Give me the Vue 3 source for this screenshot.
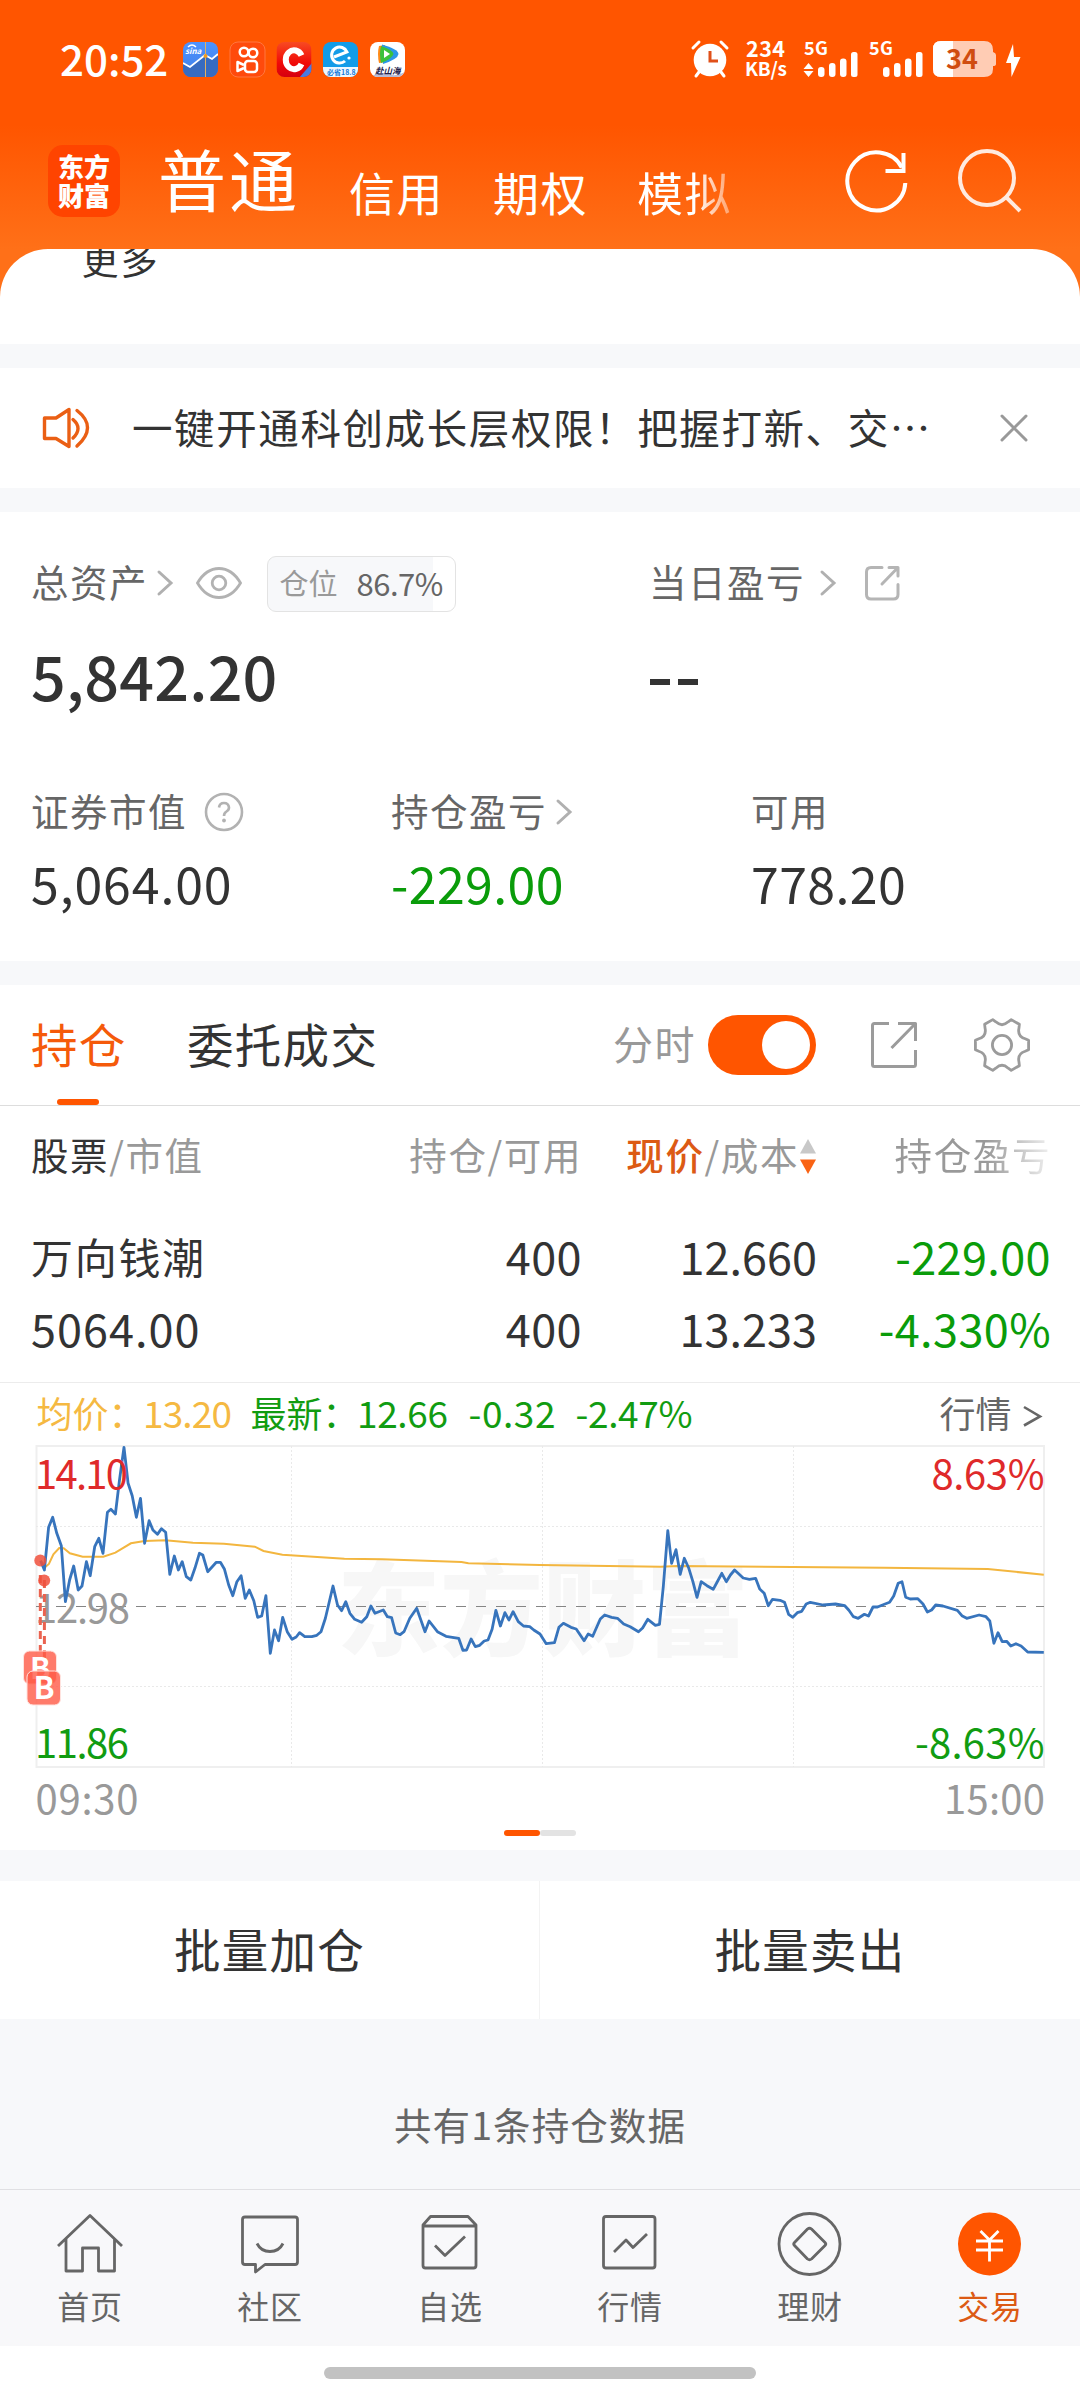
<script setup>
const price = [
  [118,392],[129,420],[141,292],[153,262],[165,310],[178,347],[190,515],[202,450],[214,408],[227,480],[238,468],[251,395],[262,437],[275,350],[287,325],[299,370],[312,247],[322,238],[335,252],[347,150],[360,52],[372,160],[384,197],[396,262],[408,205],[420,340],[433,272],[444,300],[457,313],[469,296],[481,307],[493,433],[506,378],[518,420],[529,395],[541,440],[554,450],[566,415],[579,370],[589,375],[603,425],[615,412],[628,397],[640,397],[652,418],[664,465],[676,497],[688,455],[700,437],[712,505],[724,480],[737,512],[748,562],[760,558],[772,497],[785,670],[797,600],[809,632],[821,562],[834,605],[848,628],[860,621],[870,608],[885,620],[905,620],[920,616],[932,605],[945,565],[967,468],[980,525],[992,542],[1004,515],[1016,550],[1030,568],[1050,577],[1065,560],[1077,528],[1089,550],[1113,540],[1125,560],[1137,563],[1149,609],[1162,614],[1173,605],[1190,565],[1210,535],[1234,605],[1246,573],[1270,605],[1295,619],[1332,625],[1344,661],[1355,660],[1368,627],[1380,650],[1393,646],[1406,633],[1417,630],[1429,598],[1440,541],[1453,588],[1466,548],[1478,570],[1490,545],[1505,575],[1520,588],[1538,590],[1550,600],
  [1568,612],[1586,641],[1610,638],[1623,592],[1636,580],[1658,592],[1673,597],[1696,632],[1708,612],[1721,619],[1743,567],[1756,555],[1776,562],[1793,565],[1811,582],[1830,590],[1854,605],[1866,594],[1881,568],[1903,586],[1915,583],[1926,470],[1939,302],[1950,400],[1963,359],[1975,433],[1987,385],[2000,415],[2012,455],[2024,502],[2036,455],[2053,467],[2071,478],[2084,453],[2096,430],[2109,455],[2121,435],[2133,420],[2158,444],[2176,448],[2194,445],[2206,477],[2219,490],[2231,527],[2243,508],[2265,511],[2278,517],[2290,553],[2302,562],[2315,548],[2328,544],[2341,522],[2353,517],[2390,525],[2426,522],[2453,527],[2465,541],[2478,560],[2492,565],[2510,553],[2522,558],[2535,531],[2548,531],[2568,523],[2583,517],[2595,498],[2608,460],[2619,455],[2630,502],[2643,507],[2665,506],[2680,522],[2693,546],[2705,540],[2717,525],[2738,528],[2780,541],[2793,557],[2807,565],[2843,555],[2863,560],[2874,573],[2886,640],[2898,608],[2910,635],[2923,634],[2935,648],[2950,641],[2965,648],[2984,666],[3031,667],
]
const average = [
  [118,392],[133,410],[142,402],[155,373],[172,354],[185,355],[203,370],[240,380],[300,380],[335,368],[380,340],[420,333],[480,331],[560,338],[650,341],[740,350],[765,363],[820,374],[1000,386],[1110,388],[1340,396],[1360,400],[1568,405],[1918,410],[1968,408],[2568,413],[2868,417],[3031,434],
]
const toPoints = (list) => list.map(([x, y]) => `${(x / 2.9037).toFixed(1)},${(y / 3).toFixed(1)}`).join(' ')
const priceLine = toPoints(price)
const averageLine = toPoints(average)

const polar = (deg, r) => {
  const a = (deg * Math.PI) / 180
  return `${(30 + r * Math.cos(a)).toFixed(2)} ${(30 + r * Math.sin(a)).toFixed(2)}`
}
let gear = ''
for (let k = 0; k < 6; k++) {
  const a = k * 60
  gear += `${k ? 'L' : 'M'}${polar(a - 15, 24)}L${polar(a - 10, 27)}L${polar(a + 10, 27)}L${polar(a + 15, 24)}Q${polar(a + 30, 17.5)} ${polar(a + 45, 24)}`
}
gear += 'Z'

const nav = [
  { key: 'home', label: '首页' },
  { key: 'chat', label: '社区' },
  { key: 'fav', label: '自选' },
  { key: 'quote', label: '行情' },
  { key: 'wealth', label: '理财' },
  { key: 'trade', label: '交易' },
]
</script>

<template>
  <div class="screen">
    <div class="hero">
      <div class="status">
        <span class="t clock">20:52</span>
        <svg class="apps" width="224" height="38" viewBox="0 0 224 38">
          <defs>
            <linearGradient id="sky" x1="0" y1="0" x2="0" y2="1"><stop offset="0" stop-color="#4d93ff" /><stop offset="1" stop-color="#3f7fe6" /></linearGradient>
            <linearGradient id="red" x1="0" y1="0" x2="0" y2="1"><stop offset="0" stop-color="#f84a22" /><stop offset=".6" stop-color="#f00a08" /><stop offset="1" stop-color="#d50010" /></linearGradient>
            <clipPath id="c1"><rect x="1" y="1" width="35" height="35" rx="8" /></clipPath>
            <clipPath id="c3"><rect x="94.500" y="1" width="35" height="35" rx="8" /></clipPath>
            <clipPath id="c4"><rect x="141" y="1" width="35" height="35" rx="8" /></clipPath>
            <clipPath id="c5"><rect x="188" y="1" width="35" height="35" rx="8" /></clipPath>
          </defs>
          <g clip-path="url(#c1)">
            <rect x="1" y="1" width="35" height="35" fill="url(#sky)" />
            <path d="M1 23L8 27L23 15L30 19L36 14V36H1Z" fill="#376bc0" />
            <path d="M1 22L8 26L23 14L30 18L36 13" fill="none" stroke="#fff" stroke-width="1.800" />
            <path d="M23.500 0V37" stroke="#e0b060" stroke-width="1" /><circle cx="23.500" cy="15" r="2" fill="#f09a20" />
            <text x="3" y="13" font-size="8" font-style="italic" font-weight="700" fill="#fff">sina</text>
            <path d="M6 6Q10 2 14 6" fill="none" stroke="#fff" stroke-width="1.500" />
          </g>
          <rect x="48" y="1" width="35" height="35" rx="8" fill="#ff4a0c" stroke="#ff7740" stroke-width="1" />
          <g fill="none" stroke="#fff" stroke-width="2.500">
            <circle cx="62" cy="11" r="4.300" /><circle cx="71" cy="12" r="4.300" />
            <rect x="63" y="20" width="12" height="11" rx="3" /><path d="M62 24L55.500 21V30L62 27" stroke-linejoin="round" />
          </g>
          <g clip-path="url(#c3)">
            <rect x="94.500" y="1" width="35" height="35" fill="url(#red)" />
            <path d="M130 22V37H117Z" fill="#4a7be0" />
            <path d="M119.500 14.500A8.300 9.500 0 1 0 119.500 23" fill="none" stroke="#fff" stroke-width="6" />
          </g>
          <g clip-path="url(#c4)">
            <rect x="141" y="1" width="35" height="35" fill="#139ce8" />
            <rect x="141" y="26" width="35" height="10" fill="#eef8ff" />
            <path d="M152 16L165 11A8 8 0 1 0 163 20" fill="none" stroke="#fff" stroke-width="3" /><circle cx="167" cy="17" r="1.600" fill="#fff" />
            <text x="145" y="34" font-size="7" font-weight="700" fill="#1378d8">必省18.8</text>
          </g>
          <g clip-path="url(#c5)">
            <rect x="188" y="1" width="35" height="35" fill="#fff" />
            <path d="M197 5Q195 13 197 22L204 21L203 4Z" fill="#ff8a18" />
            <path d="M200 3.500Q216 8 216.500 13Q216 18 201 23Z" fill="#2a97e8" />
            <path d="M199 5Q211 9 211.500 13Q210 18 199 22Q197 13 199 5Z" fill="#3bc13c" />
            <path d="M202 9L208 13L202 17Z" fill="#fff" />
            <path d="M188 36Q198 30 206 33T223 31V37H188Z" fill="#b8bbd5" />
            <text x="193" y="33" font-size="8.500" font-weight="700" font-style="italic" fill="#22204a">赴山海</text>
          </g>
        </svg>
        <svg class="sys" width="340" height="44" viewBox="0 0 340 44">
          <g fill="none" stroke="#fff" stroke-width="3" stroke-linecap="round">
            <path d="M4 10L10 4M38 10L32 4M7 38L10 34M35 38L32 34" />
          </g>
          <circle cx="21" cy="22" r="16.300" fill="#fff" />
          <path d="M21 13V23H29" fill="none" stroke="#e0501a" stroke-width="3" />
          <g fill="#fff" font-weight="700">
            <text x="57" y="19" font-size="21.500" textLength="39">234</text>
            <text x="56" y="38" font-size="19" textLength="42">KB/s</text>
            <text x="115" y="17" font-size="18" textLength="24">5G</text>
            <text x="180" y="17" font-size="18" textLength="24">5G</text>
          </g>
          <g fill="#fff">
            <path d="M119.500 25L124.500 31H114.500ZM119.500 39L124.500 33H114.500Z" />
            <rect x="129" y="29" width="6.500" height="10" rx="3" /><rect x="140" y="25" width="6.500" height="14" rx="3" /><rect x="151" y="20.500" width="6.500" height="18.500" rx="3" /><rect x="162" y="14" width="6.500" height="25" rx="2.500" />
            <rect x="194" y="29" width="6.500" height="10" rx="3" /><rect x="205" y="25" width="6.500" height="14" rx="3" /><rect x="216" y="20.500" width="6.500" height="18.500" rx="3" /><rect x="227" y="14" width="6.500" height="25" rx="2.500" />
          </g>
          <clipPath id="bat"><path d="M252 3H295Q304 3 304 12V14Q307 15 307 17V26Q307 28 304 28V31Q304 39 295 39H252Q244 39 244 31V11Q244 3 252 3Z" /></clipPath>
          <g clip-path="url(#bat)"><rect x="244" y="2" width="64" height="38" fill="#ffccb4" /><rect x="244" y="2" width="20" height="38" fill="#fff" /></g>
          <text x="257" y="30.500" font-size="27" font-weight="700" fill="#d04c10" textLength="32">34</text>
          <path d="M324 6L317 25H322L322.500 39L331.500 19H325Z" fill="#fff" />
        </svg>
      </div>

      <div class="tabs">
        <div class="logo"><span>东方</span><span>财富</span></div>
        <span class="t main-tab">普通</span>
        <span class="t sub">信用</span>
        <span class="t sub">期权</span>
        <span class="t sub fade">模拟</span>
        <svg class="refresh" width="66" height="66" viewBox="0 0 66 66" fill="none" stroke="#fff" stroke-width="4">
          <path d="M62.300 35A29 29 0 1 1 58.800 19.500" /><path d="M60.500 5V23H42.500" />
        </svg>
        <svg class="search" width="66" height="66" viewBox="0 0 66 66" fill="none" stroke="#ffeadf" stroke-width="4">
          <circle cx="30" cy="30" r="27" /><path d="M49 49L63 63" />
        </svg>
      </div>

      <div class="sheet"><span class="t">更多</span></div>
    </div>

    <div class="notice">
      <svg width="50" height="46" viewBox="0 0 50 46" fill="none" stroke="#ea5f14" stroke-width="3.400" stroke-linecap="round" stroke-linejoin="round">
        <path d="M3.500 13H15L28 4.500V41.500L15 33.500H3.500Z" /><path d="M32 14.500Q42 23 32 33M36 5.500Q57 22 36 41" />
      </svg>
      <span class="t notice-text">一键开通科创成长层权限！把握打新、交…</span>
      <svg class="close" width="30" height="30" viewBox="0 0 30 30" stroke="#999" stroke-width="3" stroke-linecap="round"><path d="M3 3L27 27M27 3L3 27" /></svg>
    </div>

    <div class="assets">
      <div class="line head">
        <div class="line left">
          <span class="t label">总资产</span>
          <svg class="chev" width="18" height="28" viewBox="0 0 18 28"><path d="M3 3L15 14L3 25" /></svg>
          <svg class="eye" width="48" height="36" viewBox="0 0 48 36" fill="none" stroke="#b2b2b2" stroke-width="2.800"><path d="M2.500 18Q11 3.500 24 3.500T45.500 18Q37 32.500 24 32.500T2.500 18Z" /><circle cx="24" cy="18" r="6.800" /></svg>
          <div class="ratio"><span class="t">仓位</span><span class="t num">86.7%</span></div>
        </div>
        <span class="t label">当日盈亏</span>
        <svg class="chev wide" width="18" height="28" viewBox="0 0 18 28"><path d="M3 3L15 14L3 25" /></svg>
        <svg class="share" width="36" height="36" viewBox="0 0 36 36" fill="none" stroke="#b5b5b5" stroke-width="3" stroke-linecap="round" stroke-linejoin="round"><path d="M18 2.500H7Q2.500 2.500 2.500 7V29.500Q2.500 34 7 34H29.500Q34 34 34 29.500V19.500M25 2.500H34V11M33 3.500L18 19" /></svg>
      </div>
      <div class="line total"><span class="t big left">5,842.20</span><span class="dashes"><b></b><b></b></span></div>
      <div class="trio">
        <div>
          <div class="line cap"><span class="t label">证券市值</span>
            <svg class="help" width="40" height="40" viewBox="0 0 40 40"><circle cx="20" cy="20" r="18" fill="none" stroke="#b2b2b2" stroke-width="2.600" /><path d="M15 15.500Q15.500 11 20 11T25 15.500Q25 18 22.500 19.500T20 24" fill="none" stroke="#b2b2b2" stroke-width="2.600" /><circle cx="20" cy="28.500" r="1.900" fill="#b2b2b2" /></svg>
          </div>
          <div class="line val wide-val"><span class="t">5,064.00</span></div>
        </div>
        <div>
          <div class="line cap"><span class="t label">持仓盈亏</span><svg class="chev" width="18" height="28" viewBox="0 0 18 28"><path d="M3 3L15 14L3 25" /></svg></div>
          <div class="line val green"><span class="t">-229.00</span></div>
        </div>
        <div>
          <div class="line cap"><span class="t label">可用</span></div>
          <div class="line val"><span class="t">778.20</span></div>
        </div>
      </div>
    </div>

    <div class="holdings">
      <div class="bar">
        <div class="tab on"><span class="t">持仓</span></div>
        <div class="tab"><span class="t">委托成交</span></div>
        <span class="t minute">分时</span>
        <div class="toggle"><i></i></div>
        <svg class="out" width="48" height="48" viewBox="0 0 48 48" fill="none" stroke="#9b9b9b" stroke-width="3" stroke-linejoin="round"><path d="M19 2.500H4.500Q2.500 2.500 2.500 4.500V43.500Q2.500 45.500 4.500 45.500H43.500Q45.500 45.500 45.500 43.500V29M28 2.500H45.500V20M44.500 3.500L21.500 27" /></svg>
        <svg class="gear" width="60" height="60" viewBox="0 0 60 60" fill="none" stroke="#9b9b9b" stroke-width="2.800" stroke-linejoin="round"><path :d="gear" /><circle cx="30" cy="30" r="9.600" /></svg>
      </div>

      <div class="grid heads">
        <span class="t"><em>股票</em>/市值</span>
        <span class="t">持仓/可用</span>
        <div class="sort"><span class="t"><strong>现价</strong>/成本</span>
          <svg width="18" height="36" viewBox="0 0 18 36"><path d="M9 1L17 15.500H1Z" fill="#c8c8c8" /><path d="M9 36L17 21.500H1Z" fill="#f96314" /></svg></div>
        <span class="t fading">持仓盈亏</span>
      </div>
      <div class="grid row first"><span class="t name">万向钱潮</span><span class="t">400</span><span class="t tight">12.660</span><span class="t green">-229.00</span></div>
      <div class="grid row second"><span class="t loose">5064.00</span><span class="t">400</span><span class="t tight">13.233</span><span class="t green">-4.330%</span></div>

      <svg class="chart" width="1080" height="467" viewBox="0 0 1080 467">
        <path d="M0 .5H1080" stroke="#ececec" />
        <g font-size="37">
          <text x="36.500" y="46" font-size="36" fill="#f5b942">均价：</text><text x="143" y="45.500" fill="#f5b942" textLength="89">13.20</text>
          <g fill="#119c11"><text x="250.500" y="46" font-size="36">最新：</text><text x="357" y="45.500" textLength="91">12.66</text><text x="468.500" y="45.500" textLength="87">-0.32</text><text x="575.500" y="45.500" textLength="117">-2.47%</text></g>
          <text x="939.500" y="46" font-size="36" fill="#666">行情</text><path d="M1024 25L1040 34.500L1024 43.500" fill="none" stroke="#666" stroke-width="2.600" />
        </g>
        <g transform="translate(0 48)">
          <text x="337" y="218" font-size="103" font-weight="900" fill="#f7f7f7">东方财富</text>
          <path d="M36.500 16H1044V337H36.500Z" fill="none" stroke="#efefef" stroke-width="2" />
          <path d="M36 96.500H1044M36 256.500H1044M291.500 16V337M542.500 16V337M793.500 16V337" fill="none" stroke="#e9e9e9" stroke-dasharray="2 2" />
          <path d="M36 176.500H1044" stroke="#858585" stroke-width="1.200" stroke-dasharray="10 10" />
          <g font-size="40">
            <text x="931.500" y="59" fill="#df2a2a" textLength="113">8.63%</text>
            <text x="35" y="193" fill="#999" textLength="95">12.98</text>
            <g fill="#119c11"><text x="35" y="328" textLength="94">11.86</text><text x="915" y="328" textLength="129.500">-8.63%</text></g>
            <g fill="#999"><text x="35.500" y="384" textLength="103">09:30</text><text x="944" y="384" textLength="101">15:00</text></g>
          </g>
          <polyline :points="averageLine" fill="none" stroke="#f3b63f" stroke-width="2" />
          <polyline :points="priceLine" fill="none" stroke="#3774bc" stroke-width="2.800" stroke-linejoin="round" />
          <text x="35" y="59" font-size="40" fill="#df2a2a" textLength="93">14.10</text>
          <g stroke="#ea6350" stroke-width="3" stroke-dasharray="8 6"><path d="M40.300 145V222M44.400 150V236" /></g>
          <g fill="#f0503c" fill-opacity=".85"><circle cx="40.300" cy="130.500" r="6" /><circle cx="44.200" cy="150.500" r="6" /></g>
          <g stroke="#ffe3df" fill="#ff5a46" fill-opacity=".8"><rect x="23.500" y="221" width="33" height="33" rx="6" /></g>
          <text x="30" y="248.500" font-size="30" font-weight="700" fill="#fff">B</text>
          <g stroke="#ffe3df" fill="#ff5a46" fill-opacity=".8"><rect x="27" y="241" width="33.500" height="34" rx="6" /></g>
          <text x="33.500" y="269" font-size="31" font-weight="700" fill="#fff">B</text>
          <path d="M543 403H573" stroke="#e3e3e3" stroke-width="6" stroke-linecap="round" /><path d="M507 403H537" stroke="#ff5500" stroke-width="6" stroke-linecap="round" />
        </g>
      </svg>
    </div>

    <div class="batch"><div><span class="t">批量加仓</span></div><div><span class="t">批量卖出</span></div></div>
    <div class="count"><span class="t">共有1条持仓数据</span></div>

    <div class="nav">
      <div v-for="n in nav" :key="n.key" class="item" :class="{ active: n.key === 'trade' }">
        <svg width="70" height="70" viewBox="0 0 70 70" fill="none" stroke="#666" stroke-width="2.800" stroke-linejoin="round">
          <path v-if="n.key === 'home'" d="M3 37L35 6.500L67 37M11 30V62H27.500V39H43.500V62H59.500V30" />
          <template v-else-if="n.key === 'chat'"><path d="M10 8H60Q62.500 8 62.500 10.500V53Q62.500 55.500 60 55.500H30L20.500 63V55.500H10Q7.500 55.500 7.500 53V10.500Q7.500 8 10 8Z" /><path d="M22 34.500Q26 42.500 35 42.500T48 34.500" /></template>
          <template v-else-if="n.key === 'fav'"><path d="M15.500 7.500H53L61 16V56.500Q61 59 58.500 59H10.500Q8 59 8 56.500V16ZM8 17H61" /><path d="M20 36.500L30 46.500L50 27.500" /></template>
          <template v-else-if="n.key === 'quote'"><rect x="8.500" y="7.500" width="51.500" height="51.500" rx="2.500" /><path d="M19 43L31 31L38 38.500L52 25" /></template>
          <template v-else-if="n.key === 'wealth'"><circle cx="34.500" cy="35" r="30.500" /><path d="M36.500 20L50 33.500Q51.500 35 50 36.500L36.500 50Q34.500 51.500 32.500 50L19.500 36.500Q18 35 19.500 33.500L32.500 20Q34.500 18.500 36.500 20Z" /></template>
          <template v-else><circle cx="34.500" cy="35" r="31.500" fill="#ff5500" stroke="none" /><path d="M25.500 22L34.500 31L43.500 22M21 32H48M21 41H48M34.500 31V52.500" stroke="#fff" stroke-linejoin="miter" /></template>
        </svg>
        <span class="t">{{ n.label }}</span>
      </div>
    </div>
    <div class="home-area"><i></i></div>
  </div>
</template>

<style>
body { margin: 0; background: #fff; }
</style>

<style scoped>
.screen { width: 1080px; height: 2400px; overflow: hidden; background: #f7f8fa; color: #333; font-family: "Noto Sans CJK SC", sans-serif; font-weight: 400; }
.screen * { box-sizing: border-box; }
svg { display: block; flex: none; }
.t { display: block; line-height: 1; padding-bottom: .09em; white-space: nowrap; flex: none; }
.hero { height: 344px; background: linear-gradient(#ff5500 0, #ff5500 125px, #ff7018 249px); }
.status { height: 120px; display: flex; align-items: center; }
.clock { width: 106px; margin-left: 60px; font-size: 42px; font-weight: 500; color: #fff; padding-bottom: .112em; }
.apps { margin-left: 16px; }
.sys { margin-left: 283px; }
.tabs { height: 122px; margin-bottom: 7px; display: flex; align-items: center; color: #fff; }
.logo { width: 72px; height: 72px; margin-left: 48px; border-radius: 15px; background: #ff4400; display: flex; flex-direction: column; justify-content: center; align-items: center; font-size: 26px; font-weight: 900; line-height: 29px; padding-bottom: 3px; }
.logo span { height: 29px; }
.main-tab { width: 144px; margin-left: 38px; font-size: 68px; letter-spacing: 3px; }
.sub { width: 96px; margin-left: 46px; margin-top: 24px; font-size: 46px; letter-spacing: 1.5px; }
.main-tab + .sub { margin-left: 47px; }
.sub + .sub { margin-left: 48px; }
.fade { color: transparent; background: linear-gradient(90deg, #fff 60%, rgba(255,255,255,.35) 100%); background-clip: text; -webkit-background-clip: text; }
.refresh { margin-left: 110px; }
.search { margin-left: 48px; }
.sheet { height: 95px; background: #fff; border-radius: 48px 48px 0 0; overflow: hidden; padding-left: 81.5px; }
.sheet .t { font-size: 37px; letter-spacing: 2px; margin-top: -8.5px; }
.notice { height: 120px; margin-top: 24px; background: #fff; display: flex; align-items: center; padding-left: 41px; }
.notice-text { margin-left: 41px; width: 800px; font-size: 40.5px; letter-spacing: 1.6px; padding-bottom: 1px; }
.close { margin-left: 67px; }
.assets { height: 449px; margin-top: 24px; background: #fff; padding: 42px 0 0 31px; }
.line { display: flex; align-items: center; }
.label { font-size: 37.5px; letter-spacing: 1.5px; color: #666; padding-bottom: .112em; }
.left { width: 618px; }
.head { height: 58px; }
.chev { margin-left: 8px; fill: none; stroke: #b0b0b0; stroke-width: 3; stroke-linecap: round; }
.chev.wide { margin-left: 13.5px; }
.eye { margin-left: 21px; }
.share { margin-left: 27px; }
.ratio { margin-left: 23.5px; width: 189px; height: 56px; margin-top: 1px; border: 1px solid #e3e3e3; border-radius: 9px; background: linear-gradient(90deg, #f7f8fa 165px, #fff 165px); display: flex; align-items: center; padding-left: 12px; font-size: 29px; color: #999; }
.ratio .num { color: #666; margin-left: 19px; font-size: 31px; letter-spacing: -.5px; }
.total { height: 131px; }
.big { font-size: 61px; font-weight: 500; letter-spacing: .2px; padding-bottom: .112em; }
.dashes { display: flex; gap: 8px; padding-top: 9px; padding-left: 1px; }
.dashes b { width: 20px; height: 6px; background: #333; }
.trio { display: grid; grid-template-columns: 360px 360px 1fr; margin-top: 37px; }
.cap { height: 64px; }
.val { height: 82px; font-size: 50px; letter-spacing: .4px; }
.val .t { padding-bottom: .112em; }
.wide-val { letter-spacing: .9px; }
.help { margin-left: 17px; }
.green { color: #0a9c0a; }
.holdings { margin-top: 24px; height: 865px; background: #fff; }
.bar { height: 121px; border-bottom: 1px solid #ddd; display: flex; align-items: center; padding-left: 31px; }
.tab { width: 95px; height: 120px; display: flex; align-items: center; font-size: 46.5px; letter-spacing: 1.3px; position: relative; margin-right: 61px; }
.tab .t { padding-bottom: .07em; }
.tab + .tab { width: 192px; margin-right: 234px; }
.tab.on { color: #f55a0a; }
.tab.on::after { content: ""; position: absolute; left: 26px; bottom: 0; width: 42px; height: 6px; border-radius: 3px; background: #ff5500; }
.minute { font-size: 40px; letter-spacing: 1.5px; color: #999; width: 83px; }
.toggle { width: 108px; height: 60px; margin-left: 12px; border-radius: 30px; background: #ff5500; padding: 6px 0 0 54px; flex: none; }
.toggle i { display: block; width: 48px; height: 48px; border-radius: 50%; background: #fff; }
.out { margin-left: 54px; }
.gear { margin-left: 54px; }
.grid { display: grid; grid-template-columns: 200px 351px 235px 234px; align-items: center; padding-left: 31px; justify-items: end; }
.grid > :first-child { justify-self: start; }
.heads { height: 100px; font-size: 37.5px; letter-spacing: 1.6px; color: #999; }
.heads .t { padding-bottom: .112em; }
.heads em { font-style: normal; color: #333; }
.heads strong { font-weight: 500; color: #dc5a14; }
.sort { display: flex; align-items: center; }
.fading { color: transparent; background: linear-gradient(90deg, #999 58%, #f0f0f0 100%); background-clip: text; -webkit-background-clip: text; }
.row { font-size: 45px; letter-spacing: .4px; }
.row .t { padding-bottom: .112em; }
.row .name { font-size: 42px; letter-spacing: 1.7px; }
.row .loose { letter-spacing: 1px; }
.row .tight { letter-spacing: 0; }
.first { height: 104px; }
.second { height: 50px; margin-top: -5px; }
.chart { margin-top: 27px; }
.batch { height: 138px; margin-top: 31px; background: #fff; display: grid; grid-template-columns: 540px 540px; }
.batch div { display: flex; align-items: center; justify-content: center; font-size: 46.5px; letter-spacing: 1.3px; }
.batch .t { padding-bottom: .07em; }
.batch div:first-child { border-right: 1px solid #f3f3f3; }
.count { height: 170px; padding-top: 42px; display: flex; align-items: center; justify-content: center; color: #666; font-size: 37.5px; letter-spacing: 1.1px; }
.nav { height: 157px; border-top: 1px solid #e0e0e3; background: #f8f8fa; display: grid; grid-template-columns: repeat(6, 180px); color: #666; }
.item { display: flex; flex-direction: column; align-items: center; padding-top: 19px; font-size: 32px; letter-spacing: .8px; }
.item .t { margin-top: 10px; }
.item.active { color: #dc5a14; }
.home-area { height: 54px; background: #fff; display: flex; justify-content: center; padding-top: 21px; }
.home-area i { width: 432px; height: 12px; border-radius: 6px; background: #c2c2c2; }
</style>
